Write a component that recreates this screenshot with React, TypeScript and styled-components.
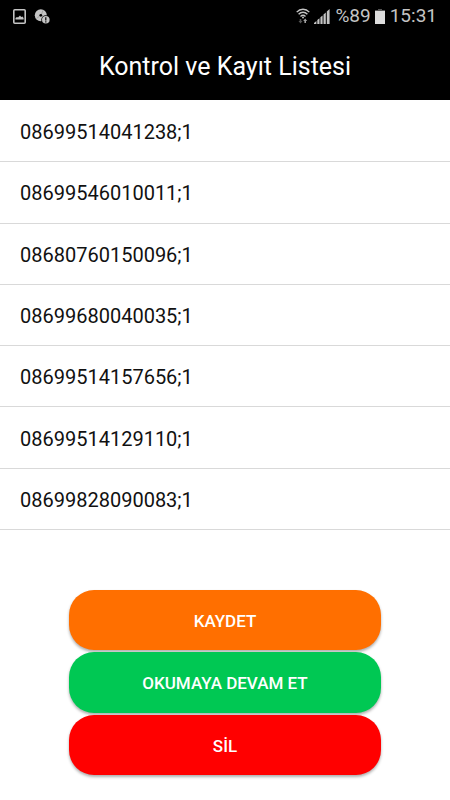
import React from "react";
import styled, { createGlobalStyle } from "styled-components";

const GlobalStyle = createGlobalStyle`
  * { box-sizing: border-box; }
  html, body { margin: 0; padding: 0; background: #ffffff; }
  body { font-family: Roboto, "Liberation Sans", sans-serif; color: #111111; }
`;

const Screen = styled.div`
  display: flex;
  flex-direction: column;
  min-height: 100vh;
`;

const StatusBar = styled.div`
  display: flex;
  align-items: center;
  justify-content: space-between;
  height: 32px;
  padding: 0 13px;
  background: #000000;
  color: #c4c4c4;
`;

const StatusGroup = styled.div`
  display: flex;
  align-items: center;
`;

const Notifications = styled(StatusGroup)`
  gap: 8px;
`;

const SignalIcons = styled(StatusGroup)`
  gap: 4px;
  margin-right: 5px;
`;

const Battery = styled(StatusGroup)`
  gap: 4px;
  margin-right: 5px;
`;

const StatusText = styled.span`
  font-size: 19px;
  line-height: 32px;
`;

const Header = styled.header`
  display: flex;
  align-items: center;
  justify-content: center;
  height: 68px;
  padding-top: 2px;
  background: #000000;
`;

const Title = styled.h1`
  margin: 0;
  font-size: 25px;
  line-height: 32px;
  font-weight: 400;
  color: #ffffff;
`;

const List = styled.ul`
  display: grid;
  grid-auto-rows: 1fr;
  min-height: 430px;
  margin: 0;
  padding: 1px 0 0;
  list-style: none;
`;

const Row = styled.li`
  display: flex;
  align-items: center;
  padding: 2px 20px 0;
  border-bottom: 1px solid #d9d9d9;
  font-size: 20px;
  line-height: 24px;
`;

const Actions = styled.div`
  display: grid;
  grid-auto-rows: 1fr;
  gap: 2px;
  min-height: 235px;
  margin-top: auto;
  padding: 25px 69px;
`;

const ActionButton = styled.button<{ $color: string }>`
  min-height: 60px;
  padding: 2px 16px 0;
  border: 0;
  border-radius: 25px;
  background: ${(p) => p.$color};
  box-shadow: 0 2px 3px rgba(0, 0, 0, 0.32);
  color: #ffffff;
  font-family: inherit;
  font-size: 17px;
  line-height: 20px;
  font-weight: 500;
  cursor: pointer;
`;

const records = [
  "08699514041238;1",
  "08699546010011;1",
  "08680760150096;1",
  "08699680040035;1",
  "08699514157656;1",
  "08699514129110;1",
  "08699828090083;1",
];

const actions = [
  { label: "KAYDET", color: "#ff6f00" },
  { label: "OKUMAYA DEVAM ET", color: "#00c853" },
  { label: "SİL", color: "#ff0000" },
];

const PictureIcon = () => (
  <svg width="13" height="15" viewBox="0 0 13 15" aria-hidden="true">
    <rect x="0.8" y="0.8" width="11.4" height="13.4" rx="1" fill="none" stroke="#c4c4c4" strokeWidth="1.6" />
    <path d="M2.5 10.5V9l1.5-1 1 .6L7 6.5l1.2 1.6 1.2-.6 1.2 1.5v1.5z" fill="#c4c4c4" />
  </svg>
);

const DiscAlertIcon = () => (
  <svg width="16" height="15" viewBox="0 0 16 15" aria-hidden="true">
    <circle cx="6.8" cy="6.3" r="6" fill="#c4c4c4" />
    <circle cx="6.8" cy="6.3" r="1.4" fill="#000000" />
    <path d="M7.6 5L9 1.4M5.6 7.2L2.6 9.4" stroke="#888888" strokeWidth="0.6" />
    <circle cx="11.8" cy="10.8" r="4.5" fill="#000000" />
    <circle cx="11.8" cy="10.8" r="3.8" fill="#c4c4c4" />
    <path d="M11.8 8.2v3.2M11.8 12.2v1.2" stroke="#000000" strokeWidth="1.2" />
  </svg>
);

const WifiIcon = () => (
  <svg width="14" height="16" viewBox="0 0 14 16" aria-hidden="true">
    <g fill="none" stroke="#c4c4c4" strokeWidth="1.4">
      <path d="M0.7 4.1C4.2 0.3 9.8 0.3 13.3 4.1" />
      <path d="M2.6 6.3C5.1 3.6 8.9 3.6 11.4 6.3" />
      <path d="M4.5 8.4C6 6.9 8 6.9 9.5 8.4" />
    </g>
    <circle cx="7" cy="9.6" r="1" fill="#c4c4c4" />
    <path d="M4.5 15.5L2.5 13h1.2v-2h1.6v2h1.2z" fill="#555555" />
    <path d="M9.2 10.5l2 2.6H10V15H8.4v-1.9H7.2z" fill="#a0a0a0" />
  </svg>
);

const SignalIcon = () => (
  <svg width="16" height="15" viewBox="0 0 16 15" aria-hidden="true">
    <path d="M0 15v-1L2.4 12v3zM3.3 15v-4l2.2-1.8V15zM6.4 15V8.2l2.2-1.8V15zM9.5 15V5.4l2.3-2V15zM12.8 15V2.4L15.6 0v15z" fill="#c4c4c4" />
  </svg>
);

const BatteryIcon = () => (
  <svg width="10" height="15" viewBox="0 0 10 15" aria-hidden="true">
    <rect x="3" y="0" width="4" height="2" fill="#555555" />
    <rect x="0" y="1" width="10" height="1" fill="#555555" />
    <rect x="0" y="2" width="10" height="13" fill="#dddddd" />
  </svg>
);

export default function App() {
  return (
    <>
      <GlobalStyle />
      <Screen>
        <StatusBar>
          <Notifications>
            <PictureIcon />
            <DiscAlertIcon />
          </Notifications>
          <StatusGroup>
            <SignalIcons>
              <WifiIcon />
              <SignalIcon />
            </SignalIcons>
            <Battery>
              <StatusText>%89</StatusText>
              <BatteryIcon />
            </Battery>
            <StatusText>15:31</StatusText>
          </StatusGroup>
        </StatusBar>
        <Header>
          <Title>Kontrol ve Kayıt Listesi</Title>
        </Header>
        <List>
          {records.map((record) => (
            <Row key={record}>{record}</Row>
          ))}
        </List>
        <Actions>
          {actions.map(({ label, color }) => (
            <ActionButton key={label} type="button" $color={color}>
              {label}
            </ActionButton>
          ))}
        </Actions>
      </Screen>
    </>
  );
}
